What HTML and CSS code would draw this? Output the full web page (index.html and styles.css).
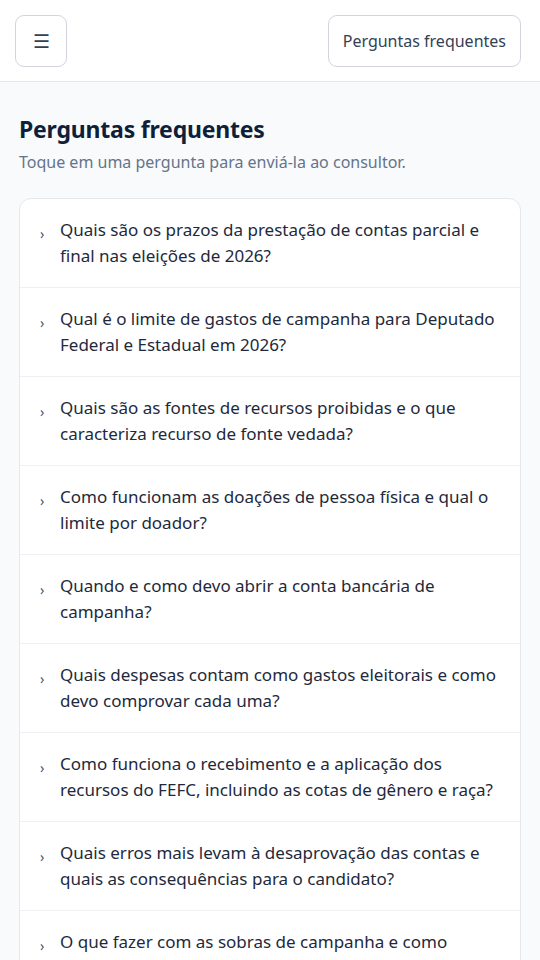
FILE: index.html
```html
<!DOCTYPE html>
<html lang="pt-BR">
<head>
    <meta charset="UTF-8">
    <meta name="viewport" content="width=device-width, initial-scale=1.0">
    <title>Perguntas frequentes</title>
    <link rel="stylesheet" href="styles.css">
</head>
<body>
    <header class="topbar">
        <button class="btn btn-menu" aria-label="Menu">☰</button>
        <button class="btn btn-faq">Perguntas frequentes</button>
    </header>

    <main class="content">
        <h1>Perguntas frequentes</h1>
        <p class="hint">Toque em uma pergunta para enviá-la ao consultor.</p>

        <ul class="faq-list">
            <li class="faq-item"><span class="chev">›</span><span>Quais são os prazos da prestação de contas parcial e final nas eleições de 2026?</span></li>
            <li class="faq-item"><span class="chev">›</span><span>Qual é o limite de gastos de campanha para Deputado Federal e Estadual em 2026?</span></li>
            <li class="faq-item"><span class="chev">›</span><span>Quais são as fontes de recursos proibidas e o que caracteriza recurso de fonte vedada?</span></li>
            <li class="faq-item"><span class="chev">›</span><span>Como funcionam as doações de pessoa física e qual o limite por doador?</span></li>
            <li class="faq-item"><span class="chev">›</span><span>Quando e como devo abrir a conta bancária de campanha?</span></li>
            <li class="faq-item"><span class="chev">›</span><span>Quais despesas contam como gastos eleitorais e como devo comprovar cada uma?</span></li>
            <li class="faq-item"><span class="chev">›</span><span>Como funciona o recebimento e a aplicação dos recursos do FEFC, incluindo as cotas de gênero e raça?</span></li>
            <li class="faq-item"><span class="chev">›</span><span>Quais erros mais levam à desaprovação das contas e quais as consequências para o candidato?</span></li>
            <li class="faq-item"><span class="chev">›</span><span>O que fazer com as sobras de campanha e como devolver recursos não utilizados?</span></li>
        </ul>
    </main>
</body>
</html>
```

FILE: styles.css
```css
* {
    box-sizing: border-box;
}
body {
    margin: 0;
    font-family: "Noto Sans", "Open Sans", sans-serif;
    background: #f8fafc;
    color: #1e293b;
}
.topbar {
    display: flex;
    justify-content: space-between;
    align-items: center;
    height: 82px;
    padding: 0 19px 0 15px;
    background: #fff;
    border-bottom: 1px solid #e5e7eb;
}
.btn {
    height: 52px;
    background: #fff;
    border: 1px solid #d1d5db;
    border-radius: 9px;
    font-family: inherit;
    color: #334155;
    cursor: pointer;
}
.btn-menu {
    width: 52px;
    font-size: 19px;
    padding: 0;
}
.btn-faq {
    padding: 0 14px;
    font-size: 16px;
}
.content {
    padding: 31px 19px 0 19px;
}
h1 {
    margin: 0;
    font-size: 23px;
    line-height: 32px;
    font-weight: 700;
    letter-spacing: -0.2px;
    color: #0f1f3a;
}
.hint {
    margin: 5px 0 24px;
    font-size: 16px;
    line-height: 24px;
    color: #64748b;
}
.faq-list {
    list-style: none;
    margin: 0;
    padding: 0;
    background: #fff;
    border: 1px solid #e5e7eb;
    border-radius: 12px;
    overflow: hidden;
}
.faq-item {
    display: flex;
    gap: 10px;
    padding: 18px 20px;
    font-size: 17px;
    line-height: 26px;
    color: #1e293b;
    border-bottom: 1px solid #eef0f3;
}
.chev {
    width: 10px;
    flex-shrink: 0;
    font-size: 14px;
    color: #475569;
    padding-top: 4px;
}
```
